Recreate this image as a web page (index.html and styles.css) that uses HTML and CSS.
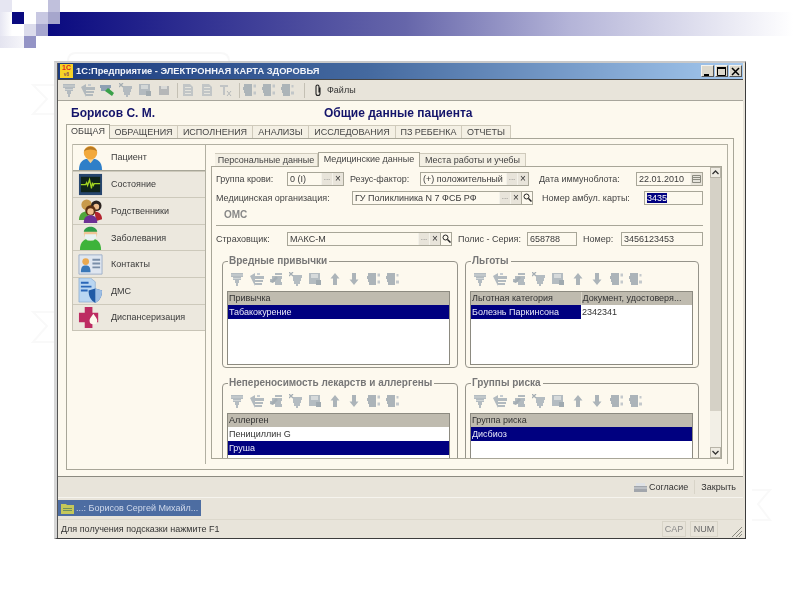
FILE: index.html
```html
<!DOCTYPE html>
<html lang="ru">
<head>
<meta charset="utf-8">
<title>ЭЛЕКТРОННАЯ КАРТА ЗДОРОВЬЯ</title>
<link rel="stylesheet" href="styles.css">
</head>
<body>
<svg class="defs" width="0" height="0">
  <symbol id="t-add" viewBox="0 0 14 14"><path d="M1 1h12v4H1zM3 5h8v3H3zM5 8h4v3H5zM6 11h2v3H6z" fill="#a2adb6"/><path d="M1 3h12M3 6.500h8" stroke="#dfe3e4" stroke-width=".6"/></symbol>
  <symbol id="t-copy" viewBox="0 0 14 14"><path d="M0 4l5-3v3h9v3H5v1h8v2H5v1h7v2H5v1z" fill="#a0abb4"/><path d="M7 1h3v2H7z" fill="#b8c2ca"/></symbol>
  <symbol id="t-edit" viewBox="0 0 14 14"><path d="M6 1h7v2H6zM3 4h10v3H3zM1 7h11v3H1zM6 10h7v3H6z" fill="#a0abb4"/><path d="M1 10l6-6 2 2-5 5z" fill="#8e9ba5"/></symbol>
  <symbol id="t-del" viewBox="0 0 14 14"><path d="M4 3h9v3H4zM4 6h8v3H4zM5 9h6v3H5zM7 12h2v2H7z" fill="#a2adb6"/><path d="M0 0l4 4M4 0L0 4" stroke="#8e9ba5" stroke-width="1.300"/></symbol>
  <symbol id="t-save" viewBox="0 0 14 14"><path d="M1 1h11v11H1z" fill="#a2adb6"/><path d="M3 2h7v4H3z" fill="#cdd3d7"/><path d="M8 8h5v5H8z" fill="#8a97a1"/></symbol>
  <symbol id="t-up" viewBox="0 0 14 14"><path d="M7 1l4.500 5.500H9V13H5V6.500H2.500z" fill="#98a4ad"/></symbol>
  <symbol id="t-down" viewBox="0 0 14 14"><path d="M7 13l4.500-5.500H9V1H5v6.500H2.500z" fill="#98a4ad"/></symbol>
  <symbol id="t-az" viewBox="0 0 14 14"><path d="M1 1h8v3H1zM0 4h9v3H0zM1 7h8v3H1zM2 10h7v3H2z" fill="#98a4ad"/><path d="M10.500 1.500h2.500v3h-2.500zM10.500 8.500h2.500v3h-2.500z" fill="#b6bec4"/></symbol>
  <symbol id="t-za" viewBox="0 0 14 14"><path d="M1 1h8v3H1zM0 4h9v3H0zM1 7h8v3H1zM2 10h7v3H2z" fill="#98a4ad"/><path d="M10.500 2h2v2.500h-2zM10 8.500h3v3h-3z" fill="#b6bec4"/></symbol>
  <symbol id="t-sheet" viewBox="0 0 14 14"><path d="M2 1h7l3 3v9H2z" fill="#b4bbc0"/><path d="M4 4h6v1H4zM4 7h6v1H4zM4 10h6v1H4z" fill="#e4e4de"/></symbol>
  <symbol id="t-tx" viewBox="0 0 14 14"><path d="M1 2h8v2H6v8H4V4H1z" fill="#b4babf"/><path d="M8 8l4 5M12 8l-4 5" stroke="#a2a9ae"/></symbol>
  <symbol id="n-patient" viewBox="0 0 26 26"><path d="M1 26c0-9 5-12 12-12s12 3 12 12z" fill="#2f7fc8"/><path d="M9 14l4 5 4-5z" fill="#f6d090"/><circle cx="13" cy="8" r="7" fill="#f2a93c"/><path d="M6 7c2-7 12-7 14 0-3-3-11-3-14 0z" fill="#b87a24"/></symbol>
  <symbol id="n-state" viewBox="0 0 26 26"><path d="M1 2h24v22H1z" fill="#27466e"/><path d="M3 5h20v16H3z" fill="#10241a"/><path d="M3 13h5l1-2 1 3 2-6 2 9 1-6 1 3 1-2h6" fill="none" stroke="#a4d422" stroke-width="1.300"/></symbol>
  <symbol id="n-family" viewBox="0 0 26 26"><circle cx="9" cy="7" r="5.500" fill="#c89a4a"/><circle cx="19" cy="8" r="5.500" fill="#2b2320"/><circle cx="19" cy="9" r="3" fill="#eebd8c"/><path d="M1 23c0-7 4-9 8-9l3 9z" fill="#4fa63c"/><path d="M17 14c5 0 8 3 8 8l-6 2z" fill="#b32430"/><circle cx="13" cy="13" r="5.400" fill="#5b2f12"/><circle cx="13" cy="14" r="3.300" fill="#f0c08e"/><path d="M6 26c0-6 3-8 7-8s7 2 7 8z" fill="#6d2f95"/></symbol>
  <symbol id="n-ill" viewBox="0 0 26 26"><path d="M2 26c0-9 5-12 11-12s11 3 11 12z" fill="#3db33a"/><circle cx="13" cy="9" r="7" fill="#f0c596"/><path d="M6 7c1-7 13-7 14 0z" fill="#2e9c48"/><path d="M7 9.500h12v4l-3 2.500h-6l-3-2.500z" fill="#e8f2f2"/></symbol>
  <symbol id="n-contact" viewBox="0 0 26 26"><path d="M1 3h24v20H1z" fill="#dfe6f0" stroke="#9fb0c8"/><circle cx="8" cy="10" r="3.500" fill="#eaa950"/><path d="M3 21c0-6 2-7 5-7s5 1 5 7z" fill="#3a78b8"/><path d="M15 7h8v2h-8zM15 11h8v2h-8zM15 15h8v2h-8z" fill="#7a8ea8"/></symbol>
  <symbol id="n-dms" viewBox="0 0 26 26"><path d="M1 0h12l5 4v21H1z" fill="#b9d6f2" stroke="#88a8cc" stroke-width=".7"/><path d="M3 4h8v2H3zM3 8h11v2H3zM3 12h7v2H3z" fill="#2a66b8"/><path d="M11 13l7-2 7 2c0 6-2 10-7 13-5-3-7-7-7-13z" fill="#1f5aa6"/><path d="M18 11l7 2c0 6-2 10-7 13z" fill="#9dbee4"/></symbol>
  <symbol id="n-disp" viewBox="0 0 26 26"><path d="M7 2h8v6h6v10h-6v6H7v-6H1V8h6z" fill="#bd2c62"/><path d="M16 9c2 3 4 5 4 7a4 4 0 0 1-8 0c0-2 2-4 4-7z" fill="#fdf9ee"/></symbol>
</svg>

<svg class="watermark" width="800" height="600" aria-hidden="true">
  <path d="M55 85H33l14 14-14 15h22M55 312H33l14 14-14 16h22M752 490h18l-12 14 12 16h-18" fill="none" stroke="#f9f9f9" stroke-width="2"/>
  <path d="M68 61c0-6 3-8 8-8h144c6 0 9 3 9 8" fill="none" stroke="#f8f8f8" stroke-width="2"/>
</svg>

<div class="deco-squares" aria-hidden="true">
  <i class="sq sq-a"></i><i class="sq sq-b"></i><i class="sq sq-c"></i><i class="sq sq-d"></i><i class="sq sq-e"></i><i class="sq sq-f"></i><i class="sq sq-g"></i><i class="sq sq-h"></i><i class="sq sq-i"></i><i class="sq sq-j"></i>
</div>
<div class="band"></div>

<div class="window">
  <div class="window-in">
    <div class="titlebar">
      <span class="logo1c">1C<small>v8</small></span>
      <span class="title-text">1С:Предприятие - ЭЛЕКТРОННАЯ КАРТА ЗДОРОВЬЯ</span>
      <span class="win-btns">
        <span class="win-btn"><svg width="13" height="13"><path d="M3 9h5v2H3z" fill="#000"/></svg></span>
        <span class="win-btn"><svg width="13" height="13"><path d="M2.500 2.500h8v8h-8z" fill="none" stroke="#000"/><path d="M2 2h9v2H2z"/></svg></span>
        <span class="win-btn"><svg width="13" height="13"><path d="M3 3l7 7M10 3l-7 7" stroke="#000" stroke-width="1.500"/></svg></span>
      </span>
    </div>

    <div class="toolbar">
      <svg class="ti"><use href="#t-add"/></svg>
      <svg class="ti"><use href="#t-copy"/></svg>
      <svg class="ti ti-color"><path d="M0 2h11v3H0zM1 5h9v3H1z" fill="#8ea0b4"/><path d="M5 8l3-3 6 5-2 3z" fill="#3aa04a"/></svg>
      <svg class="ti"><use href="#t-del"/></svg>
      <svg class="ti"><use href="#t-save"/></svg>
      <svg class="ti"><path d="M2 3h10v9H2z" fill="#a4a9ad"/><path d="M4 3h6v3H4z" fill="#d5d7d8"/></svg>
      <span class="sep"></span>
      <svg class="ti"><use href="#t-sheet"/></svg>
      <svg class="ti"><use href="#t-sheet"/></svg>
      <svg class="ti"><use href="#t-tx"/></svg>
      <span class="sep"></span>
      <svg class="ti"><use href="#t-az"/></svg>
      <svg class="ti"><use href="#t-az"/></svg>
      <svg class="ti"><use href="#t-za"/></svg>
      <span class="sep sep-last"></span>
      <svg class="clip" width="8" height="13"><path d="M6 3.500v6a2 2 0 0 1-4 0v-7a1.500 1.500 0 0 1 3 0v6" fill="none" stroke="#222" stroke-width="1.100"/></svg>
      <span class="tb-label">Файлы</span>
    </div>

    <div class="cream">
      <div class="heading">
        <span class="who">Борисов С. М.</span>
        <span class="what">Общие данные пациента</span>
      </div>
      <div class="tabs">
        <span class="tab tab-on t1">ОБЩАЯ</span>
        <span class="tab t2">ОБРАЩЕНИЯ</span>
        <span class="tab t3">ИСПОЛНЕНИЯ</span>
        <span class="tab t4">АНАЛИЗЫ</span>
        <span class="tab t5">ИССЛЕДОВАНИЯ</span>
        <span class="tab t6">ПЗ РЕБЕНКА</span>
        <span class="tab t7">ОТЧЕТЫ</span>
      </div>
      <div class="outer-panel">
        <div class="inner-frame">
          <nav class="side">
            <div class="side-item side-on"><svg class="ni"><use href="#n-patient"/></svg><span>Пациент</span></div>
            <div class="side-item"><svg class="ni"><use href="#n-state"/></svg><span>Состояние</span></div>
            <div class="side-item"><svg class="ni"><use href="#n-family"/></svg><span>Родственники</span></div>
            <div class="side-item"><svg class="ni"><use href="#n-ill"/></svg><span>Заболевания</span></div>
            <div class="side-item"><svg class="ni"><use href="#n-contact"/></svg><span>Контакты</span></div>
            <div class="side-item"><svg class="ni"><use href="#n-dms"/></svg><span>ДМС</span></div>
            <div class="side-item"><svg class="ni"><use href="#n-disp"/></svg><span>Диспансеризация</span></div>
          </nav>
          <div class="work">
            <div class="subtabs">
              <span class="subtab s1">Персональные данные</span>
              <span class="subtab subtab-on s2">Медицинские данные</span>
              <span class="subtab s3">Места работы и учебы</span>
            </div>
            <div class="subpanel">
              <div class="scroll-body">
                <div class="row row-1">
                  <label class="l70">Группа крови:</label>
                  <span class="field f57"><span class="val">0 (I)</span><span class="fb">...</span><span class="fb fx">×</span></span>
                  <label class="l70 ml6">Резус-фактор:</label>
                  <span class="field f109"><span class="val">(+) положительный</span><span class="fb">...</span><span class="fb fx">×</span></span>
                  <label class="l97 ml10">Дата иммуноблота:</label>
                  <span class="field f67"><span class="val">22.01.2010</span><span class="fb fcal"><svg width="9" height="9"><path d="M.5 1.500h8v7h-8z" fill="#e4e2da" stroke="#8a8a80"/><path d="M1 3.500h7M1 5.500h7" stroke="#8a8a80"/></svg></span></span>
                </div>
                <div class="row row-2">
                  <label class="l135">Медицинская организация:</label>
                  <span class="field f181"><span class="val">ГУ Поликлиника N 7 ФСБ РФ</span><span class="fb">...</span><span class="fb fx">×</span><span class="fb fs"><svg width="9" height="9"><circle cx="3.500" cy="3.500" r="2.500" fill="none" stroke="#222"/><path d="M5.500 5.500l3 3" stroke="#222" stroke-width="1.500"/></svg></span></span>
                  <label class="l102 ml9">Номер амбул. карты:</label>
                  <span class="field f59"><span class="val"><mark class="sel">3435</mark></span></span>
                </div>
                <div class="oms">ОМС</div>
                <div class="rule"></div>
                <div class="row row-3">
                  <label class="l70">Страховщик:</label>
                  <span class="field f165"><span class="val">МАКС-М</span><span class="fb">...</span><span class="fb fx">×</span><span class="fb fs"><svg width="9" height="9"><circle cx="3.500" cy="3.500" r="2.500" fill="none" stroke="#222"/><path d="M5.500 5.500l3 3" stroke="#222" stroke-width="1.500"/></svg></span></span>
                  <label class="l69 ml6">Полис - Серия:</label>
                  <span class="field f50"><span class="val">658788</span></span>
                  <label class="l38 ml6">Номер:</label>
                  <span class="field f82"><span class="val">3456123453</span></span>
                </div>

                <div class="groups">
                  <section class="group">
                    <h3 class="legend">Вредные привычки</h3>
                    <div class="g-tools">
                      <svg class="gi"><use href="#t-add"/></svg><svg class="gi"><use href="#t-copy"/></svg><svg class="gi"><use href="#t-edit"/></svg><svg class="gi"><use href="#t-del"/></svg><svg class="gi"><use href="#t-save"/></svg><svg class="gi"><use href="#t-up"/></svg><svg class="gi"><use href="#t-down"/></svg><svg class="gi"><use href="#t-az"/></svg><svg class="gi"><use href="#t-za"/></svg>
                    </div>
                    <div class="grid">
                      <table><thead><tr><th>Привычка</th></tr></thead>
                      <tbody><tr class="on"><td>Табакокурение</td></tr></tbody></table>
                    </div>
                  </section>
                  <section class="group">
                    <h3 class="legend">Льготы</h3>
                    <div class="g-tools">
                      <svg class="gi"><use href="#t-add"/></svg><svg class="gi"><use href="#t-copy"/></svg><svg class="gi"><use href="#t-edit"/></svg><svg class="gi"><use href="#t-del"/></svg><svg class="gi"><use href="#t-save"/></svg><svg class="gi"><use href="#t-up"/></svg><svg class="gi"><use href="#t-down"/></svg><svg class="gi"><use href="#t-az"/></svg><svg class="gi"><use href="#t-za"/></svg>
                    </div>
                    <div class="grid">
                      <table><colgroup><col class="c-cat"><col></colgroup>
                      <thead><tr><th>Льготная категория</th><th>Документ, удостоверя...</th></tr></thead>
                      <tbody><tr><td class="cell-on">Болезнь Паркинсона</td><td>2342341</td></tr></tbody></table>
                    </div>
                  </section>
                  <section class="group group-cut">
                    <h3 class="legend">Непереносимость лекарств и аллергены</h3>
                    <div class="g-tools">
                      <svg class="gi"><use href="#t-add"/></svg><svg class="gi"><use href="#t-copy"/></svg><svg class="gi"><use href="#t-edit"/></svg><svg class="gi"><use href="#t-del"/></svg><svg class="gi"><use href="#t-save"/></svg><svg class="gi"><use href="#t-up"/></svg><svg class="gi"><use href="#t-down"/></svg><svg class="gi"><use href="#t-az"/></svg><svg class="gi"><use href="#t-za"/></svg>
                    </div>
                    <div class="grid">
                      <table><thead><tr><th>Аллерген</th></tr></thead>
                      <tbody><tr><td>Пенициллин G</td></tr><tr class="on"><td>Груша</td></tr></tbody></table>
                    </div>
                  </section>
                  <section class="group group-cut">
                    <h3 class="legend">Группы риска</h3>
                    <div class="g-tools">
                      <svg class="gi"><use href="#t-add"/></svg><svg class="gi"><use href="#t-copy"/></svg><svg class="gi"><use href="#t-edit"/></svg><svg class="gi"><use href="#t-del"/></svg><svg class="gi"><use href="#t-save"/></svg><svg class="gi"><use href="#t-up"/></svg><svg class="gi"><use href="#t-down"/></svg><svg class="gi"><use href="#t-az"/></svg><svg class="gi"><use href="#t-za"/></svg>
                    </div>
                    <div class="grid">
                      <table><thead><tr><th>Группа риска</th></tr></thead>
                      <tbody><tr class="on"><td>Дисбиоз</td></tr></tbody></table>
                    </div>
                  </section>
                </div>
              </div>
              <div class="scrollbar">
                <span class="sb-btn"><svg width="9" height="9"><path d="M1.500 6L4.500 3l3 3" fill="none" stroke="#333" stroke-width="1.300"/></svg></span>
                <span class="sb-thumb"></span>
                <span class="sb-track"></span>
                <span class="sb-btn"><svg width="9" height="9"><path d="M1.500 3L4.500 6l3-3" fill="none" stroke="#333" stroke-width="1.300"/></svg></span>
              </div>
            </div>
          </div>
        </div>
      </div>
    </div>

    <div class="actions">
      <svg class="print" width="15" height="11"><path d="M3 1h9v3H3z" fill="#dfe2e6"/><path d="M1 4h13v6H1z" fill="#a2a6ac"/><path d="M1 6h13" stroke="#d5d8dc"/></svg>
      <span class="act">Согласие</span>
      <span class="act-sep"></span>
      <span class="act">Закрыть</span>
    </div>
    <div class="taskrow">
      <div class="taskbtn"><svg class="task-ico" width="13" height="11"><path d="M0 1h5l1 1h7v9H0z" fill="#c5c85a"/><path d="M2 5h9v1H2zM2 7h9v1H2z" fill="#6d8f5e"/></svg><span>...: Борисов Сергей Михайл...</span></div>
    </div>
    <div class="status">
      <span class="hint">Для получения подсказки нажмите F1</span>
      <span class="ind ind-cap">CAP</span>
      <span class="ind ind-num">NUM</span>
      <svg class="grip" width="12" height="12"><path d="M11 1L1 11M11 5l-6 6M11 8l-3 3" stroke="#8a8a80"/></svg>
    </div>
  </div>
</div>
</body>
</html>
```

FILE: styles.css
```css
* { box-sizing: border-box; }
html, body { margin: 0; padding: 0; }
body {
  width: 800px;
  height: 600px;
  overflow: hidden;
  background: #fff;
  position: relative;
  font-family: "Liberation Sans", Arial, sans-serif;
  font-size: 9px;
  color: #333;
}
.defs { position: absolute; }
.watermark { position: absolute; left: 0; top: 0; z-index: -1; }

/* slide decoration */
.deco-squares {
  position: absolute;
  left: 0;
  top: 0;
  width: 60px;
  height: 48px;
  display: grid;
  grid-template-columns: repeat(5, 12px);
  grid-template-rows: repeat(4, 12px);
}
.sq { display: block; }
.sq-a { grid-area: 1 / 1 / 2 / 2; background: #e6e6f2; }
.sq-b { grid-area: 1 / 5 / 2 / 6; background: #c0c0dc; }
.sq-c { grid-area: 2 / 1 / 4 / 2; background: linear-gradient(90deg, #e6e6f2, #fff); }
.sq-d { grid-area: 2 / 2 / 3 / 3; background: #0a0a80; }
.sq-e { grid-area: 2 / 4 / 3 / 5; background: #c8c8e2; }
.sq-f { grid-area: 2 / 5 / 3 / 6; background: #a6a6cc; }
.sq-g { grid-area: 3 / 3 / 4 / 4; background: #dcdcec; }
.sq-h { grid-area: 3 / 4 / 4 / 5; background: #a6a6cf; }
.sq-i { grid-area: 4 / 3 / 5 / 4; background: #9494c6; }
.sq-j { grid-area: 4 / 1 / 5 / 3; background: linear-gradient(90deg, #e4e4f0, #f6f6fa); }
.band {
  margin: 12px 0 0 48px;
  width: 745px;
  height: 24px;
  background: linear-gradient(90deg, #0a0a80 0%, #6666aa 48%, #b4b4d8 70%, #fff 100%);
}

/* window */
.window {
  margin: 25px 0 0 54px;
  width: 692px;
  height: 478px;
  background: #e8e4da;
  border-style: solid;
  border-color: #c9c9c9 #3c3c3c #3c3c3c #d6d6d6;
  border-width: 2px 1px 1px 3px;
  filter: blur(.35px);
}
.window-in {
  height: 100%;
  display: flex;
  flex-direction: column;
  border-left: 1px solid #555;
  border-right: 2px solid #e8e4da;
}
.titlebar {
  flex: none;
  height: 17px;
  display: flex;
  align-items: center;
  padding-left: 2px;
  background: linear-gradient(90deg, #1c3c80 0%, #44699f 45%, #a4c8ee 100%);
  border-bottom: 1px solid #444;
}
.logo1c {
  width: 13px;
  height: 14px;
  background: #f6d327;
  color: #d22;
  font: bold 7px/7px "Liberation Sans", sans-serif;
  text-align: center;
}
.logo1c small { display: block; font-size: 5px; line-height: 6px; color: #855; }
.title-text {
  margin-left: 3px;
  color: #f2f4fa;
  font-size: 9.300px;
  font-weight: bold;
}
.win-btns { margin-left: auto; display: flex; gap: 1px; padding-right: 1px; }
.win-btn {
  width: 13px;
  height: 12px;
  display: block;
  background: #dcd8cc;
  border: 1px solid;
  border-color: #f4f2ec #555 #555 #f4f2ec;
  overflow: hidden;
  line-height: 0;
}
.win-btn svg { margin: -1px 0 0 -1px; }

.toolbar {
  flex: none;
  height: 21px;
  display: flex;
  align-items: center;
  padding-left: 4px;
  background: #e8e4da;
  border-bottom: 1px solid #a8a69c;
}
.ti { width: 14px; height: 14px; margin-right: 5px; flex: none; opacity: .75; }
.ti-color { opacity: 1; }
.sep { width: 1px; height: 15px; background: #c4c0b4; margin: 0 3px 0 1px; flex: none; }
.sep-last { margin-left: 4px; }
.clip { margin-left: 6px; }
.tb-label { margin-left: 5px; }

.cream {
  flex: none;
  height: 376px;
  background: #fdf9ee;
  border-bottom: 1px solid #8c8a80;
  padding: 0 8px;
}
.heading {
  height: 23px;
  display: flex;
  align-items: center;
  font-weight: bold;
  color: #14146a;
  font-size: 12px;
}
.who { margin-left: 5px; width: 253px; }

.tabs { height: 14px; display: flex; align-items: flex-end; position: relative; z-index: 1; }
.tab {
  height: 13px;
  border: 1px solid #cfcabb;
  border-bottom: 0;
  border-left: 0;
  line-height: 12px;
  text-align: center;
  color: #444;
  background: #f4f0e4;
}
.tab-on {
  height: 15px;
  margin-bottom: -1px;
  background: #fdf9ee;
  border: 1px solid #a8a698;
  border-bottom: 0;
}
.t1 { width: 44px; }
.t2 { width: 68px; }
.t3 { width: 75px; }
.t4 { width: 56px; }
.t5 { width: 87px; }
.t6 { width: 66px; }
.t7 { width: 49px; }

.outer-panel {
  height: 332px;
  width: 668px;
  border: 1px solid #a8a698;
  padding: 5px;
}
.inner-frame {
  height: 320px;
  border: 1px solid #b2b0a2;
  border-left: 0;
  border-bottom: 0;
  display: flex;
  align-items: flex-start;
}
.side {
  flex: none;
  width: 133px;
  margin-top: -1px;
  border-left: 1px solid #c8c4b6;
  border-bottom: 1px solid #c8c4b6;
}
.side-item {
  height: 26.600px;
  display: flex;
  align-items: center;
  padding-left: 5px;
  background: #ece8de;
  border-top: 1px solid #cdc9bb;
  color: #3a3a3a;
}
.side-on { background: #fdf9ee; border-top: 1px solid #b2b0a2; border-bottom: 1px solid #a8a698; }
.ni { width: 25px; height: 25px; flex: none; }
.side-item span { margin-left: 8px; }

.work {
  flex: none;
  width: 523px;
  height: 319px;
  padding: 7px 6px 0 5px;
  border-left: 1px solid #b2b0a2;
}
.subtabs { height: 14px; display: flex; align-items: flex-end; padding-left: 4px; position: relative; z-index: 1; }
.subtab {
  height: 13px;
  line-height: 12px;
  text-align: center;
  background: #f4f0e4;
  border: 1px solid #cfcabb;
  border-bottom: 0;
  border-left: 0;
  color: #444;
}
.subtab-on {
  height: 15px;
  margin-bottom: -1px;
  background: #fdf9ee;
  border: 1px solid #a8a698;
  border-bottom: 0;
}
.s1 { width: 103px; }
.s2 { width: 102px; }
.s3 { width: 106px; }
.subpanel {
  height: 293px;
  width: 511px;
  border: 1px solid #a8a698;
  display: flex;
  background: #fdf9ee;
}
.scroll-body { width: 498px; height: 291px; overflow: hidden; padding: 5px 0 0 4px; flex: none; }

.row { display: flex; align-items: center; height: 14px; }
.row-2 { margin-top: 5px; }
.row-3 { margin-top: 6px; }
label { flex: none; white-space: nowrap; color: #444; }
.l70 { width: 71px; }
.l97 { width: 97px; }
.l135 { width: 136px; }
.l102 { width: 102px; }
.l69 { width: 69px; }
.l38 { width: 38px; }
.ml6 { margin-left: 6px; }
.ml9 { margin-left: 9px; }
.ml10 { margin-left: 10px; }
.row-1 .l70.ml6 { width: 70px; }

.field {
  flex: none;
  height: 14px;
  display: flex;
  align-items: stretch;
  background: #fdf9ee;
  border: 1px solid #a8a698;
  line-height: 12px;
  overflow: hidden;
}
.val { flex: 1; padding-left: 2px; white-space: nowrap; overflow: hidden; color: #3a3a3a; }
.fb {
  flex: none;
  width: 11px;
  background: #e8e4da;
  text-align: center;
  color: #777;
  font-size: 8px;
  line-height: 10px;
  border-left: 1px solid #f4f2ea;
}
.fx { color: #333; font-size: 10px; line-height: 11px; }
.fs { background: #fdf9ee; border-left: 1px solid #a8a698; }
.fs svg, .fcal svg { margin-top: 1px; }
.fcal { background: #e8e4da; width: 12px; }
.f57 { width: 57px; }
.f109 { width: 109px; }
.f67 { width: 67px; }
.f181 { width: 181px; }
.f59 { width: 59px; }
.f165 { width: 165px; }
.f50 { width: 50px; }
.f82 { width: 82px; }
.sel { background: #000080; color: #fff; }

.oms {
  height: 14px;
  margin: 3px 0 0 8px;
  font-weight: bold;
  font-size: 10px;
  line-height: 14px;
  color: #888;
}
.rule { width: 487px; height: 1px; margin-top: 3px; background: #a8a698; }

.groups {
  margin: 15px 0 0 6px;
  display: grid;
  grid-template-columns: 236px 234px;
  column-gap: 7px;
  row-gap: 15px;
}
.group {
  position: relative;
  height: 107px;
  padding: 10px 0 0 4px;
  border: 1px solid #96948a;
  border-radius: 4px;
}
.group-cut { height: 110px; }
.legend {
  position: absolute;
  left: 5px;
  top: -7px;
  margin: 0;
  padding: 0 2px 0 1px;
  background: #fdf9ee;
  font-size: 10px;
  line-height: 12px;
  font-weight: bold;
  color: #777;
  white-space: nowrap;
}
.g-tools { height: 14px; display: flex; gap: 5.500px; padding-left: 3px; margin-bottom: 5px; }
.gi { width: 14px; height: 14px; flex: none; opacity: .8; }
.grid {
  width: 223px;
  height: 74px;
  background: #fff;
  border: 1px solid #8c8a80;
  overflow: hidden;
}
table { width: 100%; border-collapse: collapse; table-layout: fixed; }
th, td { height: 14px; padding: 0 1px; font-weight: normal; text-align: left; white-space: nowrap; overflow: hidden; line-height: 13px; }
th { height: 13px; background: #bfbbaf; color: #333; border-left: 1px solid #d8d4c8; }
th:first-child { border-left: 0; }
.on td, .cell-on { background: #000080; color: #e8e8f8; }
.c-cat { width: 110px; }

.scrollbar {
  flex: none;
  width: 11px;
  height: 291px;
  display: flex;
  flex-direction: column;
  background: #f2efe6;
}
.sb-btn { height: 11px; flex: none; background: #eeebe2; border: 1px solid #b8b4a8; line-height: 0; }
.sb-thumb { height: 233px; flex: none; background: #d5d1c6; }
.sb-track { flex: 1; }

.actions {
  flex: none;
  height: 21px;
  display: flex;
  align-items: center;
  justify-content: flex-end;
  padding-right: 7px;
  border-bottom: 1px solid #f6f4ee;
  color: #333;
}
.print { margin-right: 1px; }
.act-sep { width: 1px; height: 14px; background: #d8d4c8; margin: 0 6px 0 6px; }
.taskrow { flex: none; height: 21px; padding-top: 2px; }
.taskbtn {
  width: 143px;
  height: 16px;
  display: flex;
  align-items: center;
  gap: 2px;
  padding-left: 3px;
  background: #4d6da2;
  color: #cfd8ea;
  white-space: nowrap;
  overflow: hidden;
}
.task-ico { flex: none; }
.status {
  flex: 1;
  display: flex;
  align-items: center;
  padding-left: 3px;
  position: relative;
  border-top: 1px solid #dcd8cc;
}
.hint { width: 601px; color: #333; }
.ind {
  height: 16px;
  line-height: 15px;
  text-align: center;
  border: 1px solid #d8d4c8;
  color: #888;
}
.ind-cap { width: 24px; }
.ind-num { width: 28px; margin-left: 4px; color: #666; }
.grip { position: absolute; right: 0; bottom: 0; }
```
